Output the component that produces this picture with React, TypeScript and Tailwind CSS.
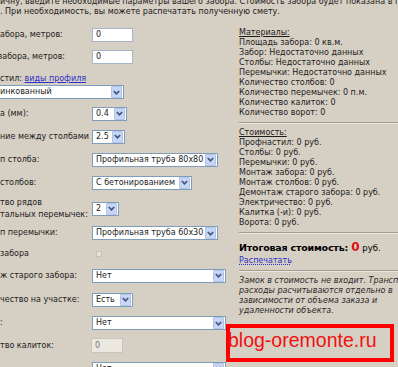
function Chevron() {
  return (
    <svg width="7" height="5" viewBox="0 0 7 5" className="block">
      <path d="M0.8 1 L3.5 3.8 L6.2 1" fill="none" stroke="#40557e" strokeWidth="1.7" />
    </svg>
  )
}

function Select({ value, w }: { value: string; w: string }) {
  return (
    <div className={`${w} h-[14px] bg-white border border-[#7f9db9] flex items-center`}>
      <span className="flex-1 pl-[3px] leading-[12px] whitespace-nowrap overflow-hidden">{value}</span>
      <span className="w-[11px] h-[12px] mr-px bg-[#c7d6f6] border border-[#b2c3e6] rounded-[1px] flex items-center justify-center">
        <Chevron />
      </span>
    </div>
  )
}

function Input({ value, disabled }: { value: string; disabled?: boolean }) {
  return disabled ? (
    <div className="w-[32px] h-[15px] ml-[-1px] bg-[#ebe8e0] border border-[#c9c5bb] flex items-center pl-[3px] text-[#777] leading-[12px]">
      {value}
    </div>
  ) : (
    <div className="w-[41px] h-[14px] bg-white border border-[#a7b5c4] flex items-center pl-[3px] leading-[12px]">
      {value}
    </div>
  )
}

type RowData = { h: string; label: React.ReactNode; control: React.ReactNode }

const rows: RowData[] = [
  { h: "h-[23px]", label: "абора, метров:", control: <Input value="0" /> },
  { h: "h-[22px]", label: <span className="-ml-[2px]">забора, метров:</span>, control: <Input value="0" /> },
]

const rows2: RowData[] = [
  { h: "h-[23px]", label: "а (мм):", control: <Select value="0.4" w="w-[35px]" /> },
  { h: "h-[23px]", label: "ние между столбами", control: <Select value="2.5" w="w-[33px]" /> },
  { h: "h-[23px]", label: "п столба:", control: <Select value="Профильная труба 80х80" w="w-[126px]" /> },
  { h: "h-[23px]", label: "столбов:", control: <Select value="С бетонированием" w="w-[100px]" /> },
  {
    h: "h-[29px]",
    label: (
      <span className="leading-[10px]">
        тво рядов
        <br />
        тальных перемычек:
      </span>
    ),
    control: <Select value="2" w="w-[27px]" />,
  },
  { h: "h-[20px]", label: "п перемычки:", control: <Select value="Профильная труба 60х30" w="w-[126px]" /> },
  {
    h: "h-[21px]",
    label: "забора",
    control: <span className="ml-[4px] w-[6px] h-[6px] border border-[#c4c0b8] bg-[#e4e0d8] block" />,
  },
  { h: "h-[23px]", label: "ж старого забора:", control: <Select value="Нет" w="w-[134px]" /> },
  { h: "h-[25px]", label: "чество на участке:", control: <Select value="Есть" w="w-[41px]" /> },
  { h: "h-[22px]", label: ":", control: <Select value="Нет" w="w-[134px]" /> },
  { h: "h-[23px]", label: "тво калиток:", control: <Input value="0" disabled /> },
  { h: "h-[23px]", label: "", control: <Select value="Нет" w="w-[134px]" /> },
]

function Row({ h, label, control }: RowData) {
  return (
    <div className={`${h} flex items-center`}>
      <div className="w-[92px] shrink-0 whitespace-nowrap">{label}</div>
      {control}
    </div>
  )
}

function Rule() {
  return <div className="my-[4px] h-[2px] border-t border-[#a29c92] border-b border-b-[#ece8df]" />
}

export default function App() {
  const materials = [
    "Площадь забора: 0 кв.м.",
    "Забор: Недостаточно данных",
    "Столбы: Недостаточно данных",
    "Перемычки: Недостаточно данных",
    "Количество столбов: 0",
    "Количество перемычек: 0 п.м.",
    "Количество калиток: 0",
    "Количество ворот: 0",
  ]
  const costs = [
    "Профнастил: 0 руб.",
    "Столбы: 0 руб.",
    "Перемычки: 0 руб.",
    "Монтаж забора: 0 руб.",
    "Монтаж столбов: 0 руб.",
    "Демонтаж старого забора: 0 руб.",
    "Электричество: 0 руб.",
    "Калитка (-и): 0 руб.",
    "Ворота: 0 руб.",
  ]

  return (
    <div className="relative w-[398px] h-[367px] overflow-hidden bg-[#d6cfc3] text-[#1c1c1c] text-[8px] font-[Tahoma,'DejaVu_Sans',sans-serif]">
      {/* intro text, cut at top */}
      <div className="h-[26px] -mt-[3px] leading-[10px] whitespace-nowrap">
        <p>ичну, введите необходимые параметры вашего забора. Стоимость забора будет показана в правой</p>
        <p>. При необходимость, вы можете распечатать полученную смету.</p>
      </div>

      <div className="flex">
        {/* form */}
        <div className="w-[239px] shrink-0">
          {rows.map((r, i) => (
            <Row key={i} {...r} />
          ))}
          <div className="h-[16px] flex items-end leading-[10px] whitespace-nowrap">
            стил:&nbsp;<span className="text-[#2f2fc8] underline">виды профиля</span>
          </div>
          <div className="h-[18px] pt-px">
            <Select value="инкованный" w="w-[128px] -ml-[4px]" />
          </div>
          {rows2.map((r, i) => (
            <Row key={i} {...r} />
          ))}
        </div>

        {/* results */}
        <div className="flex-1 pt-[5px] leading-[10px] whitespace-nowrap">
          <p className="underline">Материалы:</p>
          {materials.map((t) => (
            <p key={t}>{t}</p>
          ))}
          <Rule />
          <p className="underline">Стоимость:</p>
          {costs.map((t) => (
            <p key={t}>{t}</p>
          ))}
          <Rule />
          <p className="mt-[6px] leading-[14px] text-black">
            <span className="font-bold text-[9.5px] tracking-[-0.2px]">Итоговая стоимость: </span>
            <span className="font-bold text-[12px] text-[#e01010]">0</span>
            <span className="text-[8.5px]"> руб.</span>
          </p>
          <p className="text-[#2f2fc8] underline decoration-dotted">Распечатать</p>
          <Rule />
          <p className="italic text-[#2a2a2a] mt-[1px]">
            Замок в стоимость не входит. Транспортные
            <br />
            расходы расчитываются отдельно в
            <br />
            зависимости от объема заказа и
            <br />
            удаленности объекта.
          </p>
        </div>
      </div>

      {/* watermark */}
      <div className="absolute left-[226px] top-[324px] w-[168px] h-[38px] border-4 border-[#ff0000] pt-[1px] text-[19.5px] leading-[23px] text-[#ee1111] font-['Liberation_Sans',Arial,sans-serif] whitespace-nowrap">
        <span className="-ml-[2px]">blog-oremonte.ru</span>
      </div>
    </div>
  )
}
